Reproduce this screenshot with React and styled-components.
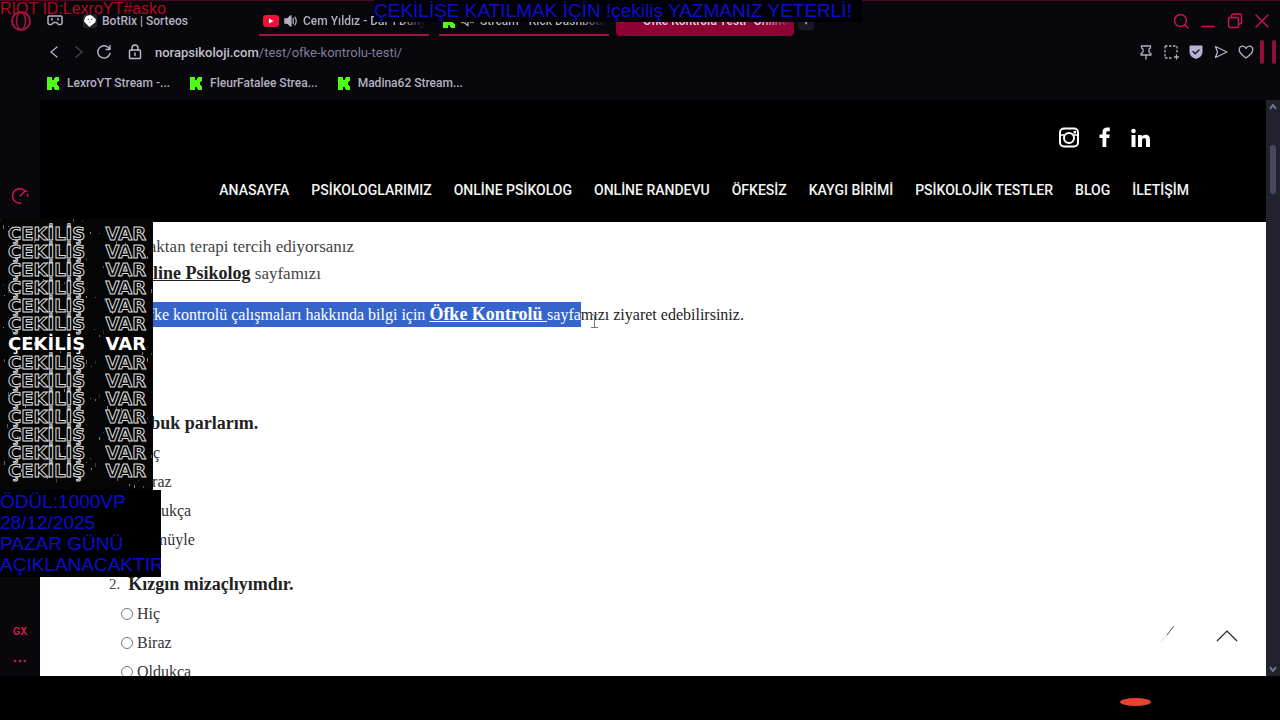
import React from "react";
import styled, { createGlobalStyle, css } from "styled-components";

const GlobalStyle = createGlobalStyle`
  *, *::before, *::after { box-sizing: border-box; }
  body { margin: 0; background: #000; }
  button { border: 0; padding: 0; background: none; color: inherit; font: inherit; }
  a { color: inherit; text-decoration: none; }
  svg { display: block; flex: none; }
`;

const Screen = styled.div`
  position: relative;
  display: flex;
  flex-direction: column;
  height: 100vh;
  overflow: hidden;
  background: #000;
`;

const Browser = styled.div`
  display: flex;
  flex-direction: column;
  flex: 1;
  min-height: 0;
  background: #07070c;
  color: #b4b0c2;
  font-family: Roboto, Inter, "Liberation Sans", sans-serif;
  font-size: 12px;
`;

const TabBar = styled.header`
  display: flex;
  align-items: center;
  height: 36px;
  padding: 5px 10px 0 10px;
  border-top: 1px solid #4a0a20;
`;

const Brand = styled.div`
  display: flex;
  align-items: center;
  gap: 15px;
  margin-right: 16px;
`;

const Tabs = styled.nav`
  display: flex;
  flex: 1;
  gap: 10px;
  height: 100%;
  min-width: 0;
`;

const Tab = styled.button`
  display: flex;
  align-items: center;
  gap: 5px;
  flex: 0 1 ${(p) => (p.$active ? 178 : 170)}px;
  min-width: 0;
  height: 30px;
  padding: 2px 4px 0;
  overflow: hidden;
  white-space: nowrap;
  color: ${(p) => (p.$active ? "#e8cbd7" : "#b4b0c2")};
  font-weight: ${(p) => (p.$active ? 600 : 500)};
  border-bottom: 2px solid ${(p) => (p.$playing ? "#9c1740" : "transparent")};
  ${(p) =>
    p.$active &&
    css`
      background: #8f0033;
      border-radius: 4px;
      padding-left: 8px;
      margin-left: -3px;
    `}
`;

const TabTitle = styled.span`
  overflow: hidden;
  flex: 1;
  text-align: left;
  mask-image: linear-gradient(to right, #000 80%, transparent);
`;

const PlainTitle = styled.span`
  text-align: left;
`;

const NewTab = styled.button`
  width: 16px;
  height: 23px;
  padding-top: 2px;
  margin: 1px 0 0 -6px;
  border-radius: 3px;
  background: #191923;
  font-size: 16px;
`;

const WindowButtons = styled.div`
  display: flex;
  align-items: center;
  gap: 11px;
  color: #d3144f;
`;

const AddressBar = styled.div`
  display: flex;
  align-items: center;
  height: 32px;
  padding: 0 4px 0 46px;
`;

const NavButtons = styled.div`
  display: flex;
  align-items: center;
  gap: 9px;
`;

const IconButton = styled.button`
  display: flex;
  align-items: center;
  justify-content: center;
  width: 16px;
  height: 16px;
  color: ${(p) => (p.$dim ? "#44434e" : "inherit")};
`;

const Address = styled.div`
  display: flex;
  align-items: center;
  gap: 12px;
  flex: 1;
  margin-left: 15px;
  font-size: 13px;
  font-weight: 500;
  color: #c2bfce;
`;

const Path = styled.span`
  color: #817b98;
  font-weight: 400;
`;

const PageActions = styled.div`
  display: flex;
  align-items: center;
  gap: 9px;
`;

const Bars = styled.div`
  display: flex;
  gap: 8px;
  margin-left: 6px;
  span {
    width: 4px;
    height: 24px;
    border-radius: 2px;
    background: #8f0f36;
  }
`;

const Bookmarks = styled.nav`
  display: flex;
  align-items: center;
  gap: 20px;
  height: 32px;
  padding: 0 0 2px 47px;
`;

const Bookmark = styled.a`
  display: flex;
  align-items: center;
  gap: 7px;
  font-weight: 500;
`;

const Body = styled.div`
  display: flex;
  flex: 1;
  min-height: 0;
`;

const Sidebar = styled.aside`
  display: flex;
  flex-direction: column;
  align-items: center;
  flex: none;
  width: 40px;
  padding: 87px 0 8px;
  color: #d3144f;
`;

const SidebarBottom = styled.div`
  display: flex;
  flex-direction: column;
  align-items: center;
  gap: 17px;
  margin-top: auto;
  font-family: Inter, sans-serif;
  font-size: 10px;
  font-weight: 700;
  line-height: 12px;
`;

const Page = styled.main`
  position: relative;
  flex: 1;
  min-width: 0;
  overflow: hidden;
  background: #fff;
`;

const SiteHeader = styled.div`
  display: flex;
  flex-direction: column;
  gap: 30px;
  height: 122px;
  padding: 27px 0 0;
  background: #000;
  color: #f4f4f4;
`;

const Social = styled.div`
  display: flex;
  justify-content: flex-end;
  gap: 14px;
  padding-right: 115px;
`;

const SiteNav = styled.nav`
  display: flex;
  justify-content: flex-end;
  gap: 22px;
  padding-right: 77px;
  font-family: Roboto, "Open Sans", sans-serif;
  font-size: 14px;
  font-weight: 500;
  line-height: 24px;
  white-space: nowrap;
`;

const Article = styled.article`
  padding: 12px 24px 0 69px;
  font-family: "Liberation Serif", serif;
  font-size: 16px;
  line-height: 26px;
  color: #444;
`;

const Intro = styled.p`
  margin: 0 0 15px 20px;
  font-size: 17px;
`;

const Strong = styled.a`
  font-weight: 700;
  font-size: 18px;
  color: ${(p) => (p.$light ? "#fff" : "#222")};
  text-decoration: underline;
`;

const Selected = styled.span`
  display: inline-block;
  background: #3565cc;
  color: #fff;
`;

const Info = styled.p`
  margin: 0 0 82px 28px;
  color: #222;
  line-height: 24px;
`;

const Question = styled.fieldset`
  margin: 0 0 16px;
  padding: 0;
  border: 0;
`;

const Legend = styled.legend`
  display: flex;
  gap: 8px;
  padding: 0;
  line-height: 29px;
  font-size: 15px;
  b {
    font-size: 18px;
    color: #222;
  }
`;

const Option = styled.label`
  display: flex;
  align-items: center;
  gap: 4px;
  padding-left: 12px;
  line-height: 29px;
  color: #333;
`;

const Radio = styled.input`
  appearance: none;
  width: 12px;
  height: 12px;
  margin: 0;
  border: 1px solid #777;
  border-radius: 50%;
`;

const ToTop = styled.button`
  position: absolute;
  right: 28px;
  bottom: 34px;
`;

const Stroke = styled.div`
  position: absolute;
  right: 89px;
  bottom: 32px;
`;

const TextCursor = styled.div`
  position: absolute;
  left: 550px;
  top: 214px;
`;

const Scrollbar = styled.div`
  display: flex;
  flex-direction: column;
  align-items: center;
  flex: none;
  width: 14px;
  padding: 4px 0;
  background: #22222e;
  color: #77778a;
`;

const Thumb = styled.div`
  width: 6px;
  height: 49px;
  margin: 35px 0 auto;
  border-radius: 3px;
  background: #47475f;
`;

const StreamFooter = styled.footer`
  display: flex;
  justify-content: flex-end;
  flex: none;
  height: 44px;
  padding: 22px 129px 0 0;
`;

const Blob = styled.div`
  width: 31px;
  height: 8px;
  border-radius: 50%;
  background: #e8432f;
`;

const Handle = styled.div`
  position: absolute;
  left: 0;
  top: 0;
  font-family: "Liberation Sans", sans-serif;
  font-size: 16px;
  line-height: 18px;
  color: #b00a1c;
`;

const Banner = styled.div`
  position: absolute;
  left: 374px;
  top: 0;
  padding-right: 10px;
  background: #020206;
  font-family: "Liberation Sans", sans-serif;
  font-size: 19px;
  line-height: 22px;
  white-space: nowrap;
  color: #0d0dcf;
`;

const Giveaway = styled.section`
  position: absolute;
  left: 0;
  top: 219px;
`;

const Poster = styled.div`
  position: relative;
  width: 153px;
  height: 271px;
  padding: 6px 7px 0 8px;
  background: #050505;
  font-family: "DejaVu Sans", sans-serif;
  font-size: 18px;
  font-weight: 700;
`;

const PosterLine = styled.div`
  position: relative;
  display: flex;
  justify-content: space-between;
  line-height: 18px;
  color: #060606;
  -webkit-text-stroke: 1px #dcdcdc;
  ${(p) =>
    p.$solid &&
    css`
      line-height: 21px;
      color: #fff;
      -webkit-text-stroke: 0;
    `}
`;

const Specks = styled.svg`
  position: absolute;
  left: 0;
  top: 0;
`;

const Prize = styled.div`
  width: 161px;
  padding: 1px 0 2px;
  overflow: hidden;
  background: #000;
  font-family: "Liberation Sans", sans-serif;
  font-size: 19px;
  line-height: 21px;
  white-space: nowrap;
  color: #0d0dcf;
`;

function Icon({ size = 16, w = 1.4, children, ...rest }) {
  return (
    <svg width={size} height={size} viewBox="0 0 16 16" fill="none" stroke="currentColor" strokeWidth={w} strokeLinecap="round" strokeLinejoin="round" aria-hidden="true" {...rest}>
      {children}
    </svg>
  );
}

const KickIcon = () => (
  <svg width="13" height="13" viewBox="0 0 13 13" fill="#4dfc18" aria-hidden="true">
    <path d="M0 0h5v3h2V1h1V0h4v4h-1v1h-1v3h1v1h1v4H8v-1H7v-2H5v3H0z" />
  </svg>
);

const specks = Array.from({ length: 170 }, (_, i) => ({
  x: (i * 67 + (i % 7) * 11) % 152,
  y: (i * 41 + (i % 5) * 29) % 268,
  h: 1 + (i % 4),
  o: 0.15 + (i % 5) * 0.09,
}));

const bookmarks = ["LexroYT Stream -...", "FleurFatalee Strea...", "Madina62 Stream..."];
const menu = ["ANASAYFA", "PSİKOLOGLARIMIZ", "ONLİNE PSİKOLOG", "ONLİNE RANDEVU", "ÖFKESİZ", "KAYGI BİRİMİ", "PSİKOLOJİK TESTLER", "BLOG", "İLETİŞİM"];
const answers = ["Hiç", "Biraz", "Oldukça", "Tümüyle"];
const questions = ["Çabuk parlarım.", "Kızgın mizaçlıyımdır."];

export default function App() {
  return (
    <Screen>
      <GlobalStyle />
      <Browser>
        <TabBar>
          <Brand>
            <svg width="22" height="22" viewBox="0 0 22 22" fill="none" stroke="#a51743" aria-hidden="true">
              <circle cx="11" cy="11" r="9" strokeWidth="2" />
              <ellipse cx="11" cy="11" rx="4.5" ry="8.5" strokeWidth="1.5" />
            </svg>
            <Icon w={1.5}>
              <path d="M2 3h12a1 1 0 0 1 1 1v6.500l-1 1h-2.500l-2-2h-3l-2 2H2l-1-1V4a1 1 0 0 1 1-1zM5 5.500v1.500M11 5.500v1.500" />
            </Icon>
          </Brand>
          <Tabs aria-label="Tabs">
            <Tab>
              <svg width="14" height="14" viewBox="0 0 15 15" aria-hidden="true">
                <rect width="15" height="15" rx="3" fill="#23232c" />
                <path d="M4 2l4-1 3 2 3 3-1 3-6 5-6-6 1-4z" fill="#fff" />
                <path d="M5 5h1.500v1.500H5zM8.500 5H10v1.500H8.500zM7 8h1v1H7z" fill="#777" />
              </svg>
              <PlainTitle>BotRix | Sorteos</PlainTitle>
            </Tab>
            <Tab $playing>
              <svg width="16" height="12" viewBox="0 0 16 12" aria-hidden="true">
                <rect width="16" height="12" rx="3" fill="#f0103a" />
                <path d="M6 3.500v5l4.500-2.500z" fill="#fff" />
              </svg>
              <Icon size={14}>
                <path d="M1 5.500h3L8 2v12l-4-3.500H1z" fill="currentColor" />
                <path d="M10.500 5v6M12.500 3.500q3 4.500 0 9" />
              </Icon>
              <TabTitle>Cem Yıldız - Dar-ı Dünya</TabTitle>
            </Tab>
            <Tab $playing>
              <KickIcon />
              <Icon size={14}>
                <path d="M1 6h3l4-3.500v11L4 10H1zM11 6l3 4M14 6l-3 4" />
              </Icon>
              <TabTitle>Stream - Kick Dashboard</TabTitle>
            </Tab>
            <Tab $active>
              <Icon size={14} stroke="#6f0a30">
                <circle cx="8" cy="8" r="5" />
              </Icon>
              <TabTitle>Öfke Kontrolü Testi -Online</TabTitle>
            </Tab>
            <NewTab aria-label="New tab">+</NewTab>
          </Tabs>
          <WindowButtons>
            <IconButton aria-label="Search">
              <Icon><circle cx="7.500" cy="7.500" r="6" /><path d="M12 12l3 3" /></Icon>
            </IconButton>
            <IconButton aria-label="Minimize">
              <Icon><path d="M2 13.500h12" /></Icon>
            </IconButton>
            <IconButton aria-label="Restore">
              <Icon><rect x="1.500" y="4.500" width="10" height="10" rx="2" /><path d="M4.500 4V3a2 2 0 0 1 2-2h6a2 2 0 0 1 2 2v6a2 2 0 0 1-2 2h-1" /></Icon>
            </IconButton>
            <IconButton aria-label="Close">
              <Icon><path d="M2 2l12 12M14 2L2 14" /></Icon>
            </IconButton>
          </WindowButtons>
        </TabBar>

        <AddressBar>
          <NavButtons>
            <IconButton aria-label="Back"><Icon><path d="M11 3L5 8l6 5" /></Icon></IconButton>
            <IconButton aria-label="Forward" $dim><Icon><path d="M5 3l6 5-6 5" /></Icon></IconButton>
            <IconButton aria-label="Reload"><Icon><path d="M13.500 5A6.200 6.200 0 1 0 14 9.500M14 1.500V5.500h-4" /></Icon></IconButton>
          </NavButtons>
          <Address>
            <Icon><rect x="2.500" y="6" width="11" height="8.500" rx="1" /><path d="M5 6V4a3 3 0 0 1 6 0v2M8 9v2.500" /></Icon>
            <span>norapsikoloji.com<Path>/test/ofke-kontrolu-testi/</Path></span>
          </Address>
          <PageActions>
            <IconButton aria-label="Pin">
              <Icon w={1.300}><path d="M3.500 2h9v2l-1.500 1v3l2 2v1H3v-1l2-2V5L3.500 4zM8 11v4" /></Icon>
            </IconButton>
            <IconButton aria-label="Snapshot">
              <Icon w={1.300}><path d="M2 2h12v8M2 2v12h8" strokeDasharray="2.500 1.500" strokeLinecap="butt" /><path d="M13.500 11v4M11.500 13h4" /></Icon>
            </IconButton>
            <IconButton aria-label="Protection">
              <Icon stroke="none"><path d="M1.500 2.500q0-1 1-1h11q1 0 1 1V8q0 5-6.500 7Q1.500 13 1.500 8z" fill="#b9b3d3" /><path d="M5 7.500l2.200 2.200L11 6" stroke="#15131f" /></Icon>
            </IconButton>
            <IconButton aria-label="Send">
              <Icon w={1.300}><path d="M2.500 2.500L14 8 2.500 13.500 4.500 8z" /></Icon>
            </IconButton>
            <IconButton aria-label="Favourite">
              <Icon w={1.300}><path d="M8 14Q1 9 1.200 5.500C1.500 1.500 6.500 1 8 4.500 9.500 1 14.500 1.500 14.800 5.500 15 9 8 14 8 14z" /></Icon>
            </IconButton>
          </PageActions>
          <Bars><span /><span /></Bars>
        </AddressBar>

        <Bookmarks aria-label="Bookmarks">
          {bookmarks.map((b) => (
            <Bookmark href="#" key={b}><KickIcon />{b}</Bookmark>
          ))}
        </Bookmarks>

        <Body>
          <Sidebar>
            <Icon size={18} w={1.300}><path d="M8.500 14.500A6.500 6.500 0 1 1 12 3M15 6.500l-.5 1.500M8 8l4-4 2-.5" /></Icon>
            <SidebarBottom>
              <span>GX</span>
              <Icon size={14} stroke="none"><g fill="currentColor"><circle cx="2.500" cy="8" r="1.500" /><circle cx="8" cy="8" r="1.500" /><circle cx="13.500" cy="8" r="1.500" /></g></Icon>
            </SidebarBottom>
          </Sidebar>

          <Page>
            <SiteHeader>
              <Social>
                <a href="#" aria-label="Instagram">
                  <svg width="22" height="21" viewBox="0 0 22 21" fill="none" stroke="#fff" strokeWidth="2">
                    <rect x="2" y="1.500" width="18" height="18" rx="4" />
                    <circle cx="11" cy="11" r="5" />
                    <path d="M2 8h4.500M15.500 8H20" strokeWidth="1.500" />
                    <path d="M15.500 4h2.500v2.500h-2.500z" fill="#fff" stroke="none" />
                  </svg>
                </a>
                <a href="#" aria-label="Facebook">
                  <svg width="22" height="21" viewBox="0 0 22 21" fill="#fff">
                    <path d="M8.500 20v-9H5.500V7.500h3V5.200C8.500 2 10.200.5 13 .5h2.800v3.700h-2c-1.100 0-1.500.5-1.500 1.500v1.800h3.400L15.200 11h-2.900v9z" />
                  </svg>
                </a>
                <a href="#" aria-label="LinkedIn">
                  <svg width="21" height="21" viewBox="0 0 21 21" fill="#fff">
                    <circle cx="3.500" cy="4" r="2.300" />
                    <path d="M1.500 8h4v12h-4zM8 8h3.800v1.700C12.500 8.500 13.800 7.700 15.500 7.700c3.500 0 4.500 2.200 4.500 5.500V20h-4v-6.200c0-1.700-.4-2.700-1.800-2.700-1.600 0-2.200 1.100-2.200 2.700V20H8z" />
                  </svg>
                </a>
              </Social>
              <SiteNav aria-label="Site">
                {menu.map((m) => <a href="#" key={m}>{m}</a>)}
              </SiteNav>
            </SiteHeader>

            <Article>
              <Intro>
                Uzaktan terapi tercih ediyorsanız
                <br />
                <Strong href="#">Online Psikolog</Strong> sayfamızı
              </Intro>
              <Info>
                <Selected>Öfke kontrolü çalışmaları hakkında bilgi için <Strong href="#" $light>Öfke Kontrolü </Strong>sayfa</Selected>
                mızı ziyaret edebilirsiniz.
              </Info>
              {questions.map((q, i) => (
                <Question key={q}>
                  <Legend><span>{i + 1}.</span><b>{q}</b></Legend>
                  {answers.map((a) => (
                    <Option key={a}><Radio type="radio" name={`q${i}`} />{a}</Option>
                  ))}
                </Question>
              ))}
            </Article>

            <TextCursor>
              <svg width="9" height="14" viewBox="0 0 9 14" fill="none" stroke="#777"><path d="M1 .5h2l1.500 1L6 .5h2M4.500 1v12M1 13.500h7" /></svg>
            </TextCursor>
            <Stroke>
              <svg width="18" height="20" viewBox="0 0 18 20" fill="none">
                <path d="M2 18l6-7" stroke="#ccc" strokeDasharray="2 1" />
                <path d="M8 11l7-9" stroke="#555" />
              </svg>
            </Stroke>
            <ToTop aria-label="Back to top">
              <svg width="22" height="12" viewBox="0 0 22 12" fill="none" stroke="#222" strokeWidth="1.200"><path d="M1 11L11 1l10 10" /></svg>
            </ToTop>
          </Page>

          <Scrollbar>
            <svg width="8" height="6" viewBox="0 0 8 6" fill="none" stroke="currentColor" strokeWidth="2"><path d="M1 5l3-4 3 4" /></svg>
            <Thumb />
            <svg width="8" height="6" viewBox="0 0 8 6" fill="none" stroke="currentColor" strokeWidth="2"><path d="M1 1l3 4 3-4" /></svg>
          </Scrollbar>
        </Body>
      </Browser>

      <StreamFooter><Blob /></StreamFooter>

      <Handle>RIOT ID:LexroYT#asko</Handle>
      <Banner>ÇEKİLİŞE KATILMAK İÇİN !çekiliş YAZMANIZ YETERLİ!</Banner>
      <Giveaway>
        <Poster>
          <Specks width="153" height="271" aria-hidden="true">
            {specks.map((s, i) => <rect key={i} x={s.x} y={s.y} width="1" height={s.h} fill="#fff" opacity={s.o} />)}
          </Specks>
          {Array.from({ length: 14 }, (_, i) => (
            <PosterLine key={i} $solid={i === 6}><span>ÇEKİLİŞ</span><span>VAR</span></PosterLine>
          ))}
        </Poster>
        <Prize>
          <div>ÖDÜL:1000VP</div>
          <div>28/12/2025</div>
          <div>PAZAR GÜNÜ</div>
          <div>AÇIKLANACAKTIR</div>
        </Prize>
      </Giveaway>
    </Screen>
  );
}
